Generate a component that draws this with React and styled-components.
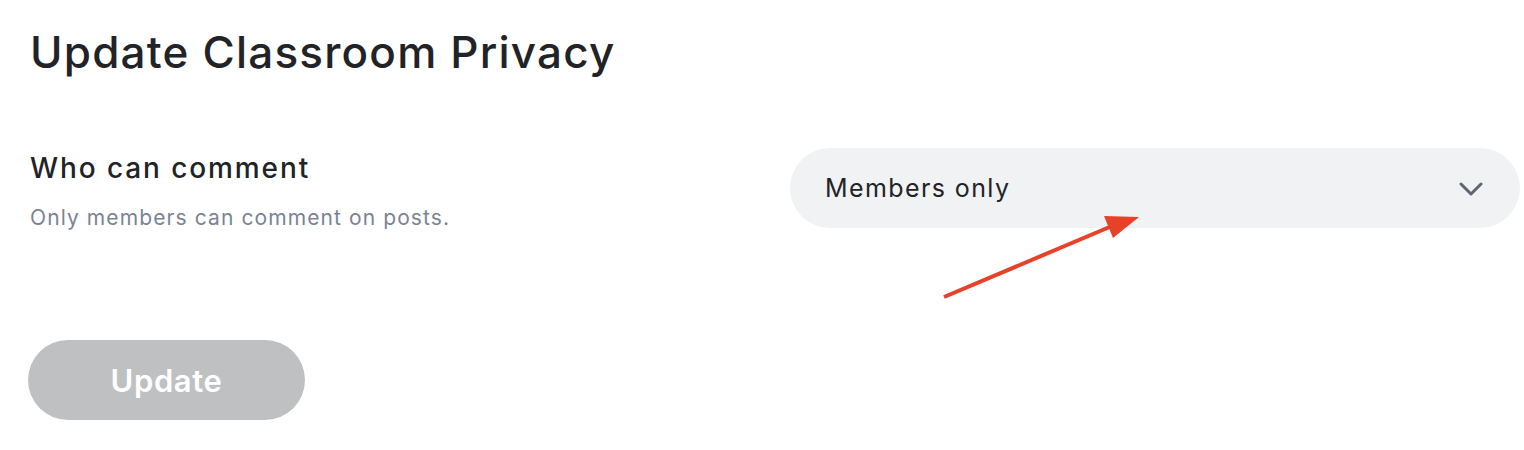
import React from 'react';
import styled, { createGlobalStyle } from 'styled-components';

const GlobalStyle = createGlobalStyle`
  body {
    margin: 0;
    background: #ffffff;
    font-family: Inter, 'Noto Sans', sans-serif;
    color: #222326;
  }
`;

const Page = styled.div`
  position: relative;
  width: 1524px;
  height: 450px;
  box-sizing: border-box;
  padding: 21px 4px 0 30px;
`;

const Title = styled.h1`
  margin: 0;
  font-size: 44px;
  font-weight: 500;
  line-height: 62px;
  letter-spacing: 1.2px;
`;

const SettingRow = styled.div`
  display: grid;
  grid-template-columns: 1fr 730px;
  align-items: start;
  margin-top: 65px;
`;

const Label = styled.div`
  padding-top: 3px;
`;

const LabelTitle = styled.div`
  font-size: 28px;
  font-weight: 500;
  line-height: 34px;
  letter-spacing: 1.9px;
`;

const LabelHint = styled.div`
  margin-top: 20px;
  font-size: 21px;
  line-height: 26px;
  letter-spacing: 1.1px;
  color: #7b8394;
`;

const Select = styled.div`
  display: flex;
  align-items: center;
  justify-content: space-between;
  height: 80px;
  padding: 0 37px 0 35px;
  border-radius: 40px;
  background: #f1f2f4;
  font-size: 25px;
  letter-spacing: 1.4px;
  color: #222326;
`;

const Chevron = styled.svg`
  width: 24px;
  height: 14px;
  margin-top: 2px;
  color: #5f6571;
`;

const UpdateButton = styled.button`
  display: block;
  width: 277px;
  height: 80px;
  margin-top: 109px;
  margin-left: -2px;
  border: none;
  border-radius: 40px;
  background: #bfc0c2;
  color: #ffffff;
  font-family: inherit;
  font-size: 31px;
  font-weight: 600;
  letter-spacing: 0.6px;
`;

const Annotation = styled.svg`
  position: absolute;
  left: 0;
  top: 0;
  pointer-events: none;
`;

export default function App() {
  return (
    <>
      <GlobalStyle />
      <Page>
        <Title>Update Classroom Privacy</Title>
        <SettingRow>
          <Label>
            <LabelTitle>Who can comment</LabelTitle>
            <LabelHint>Only members can comment on posts.</LabelHint>
          </Label>
          <Select>
            <span>Members only</span>
            <Chevron viewBox="0 0 24 14" fill="none" stroke="currentColor" strokeWidth="3" strokeLinecap="round" strokeLinejoin="round">
              <path d="M2 2l10 10 10-10" />
            </Chevron>
          </Select>
        </SettingRow>
        <UpdateButton disabled>Update</UpdateButton>
        <Annotation width="1524" height="450">
          <line x1="944" y1="297" x2="1112" y2="226" stroke="#e8412a" strokeWidth="4" />
          <polygon points="1139,217 1113,238 1104,216" fill="#e8412a" />
        </Annotation>
      </Page>
    </>
  );
}
